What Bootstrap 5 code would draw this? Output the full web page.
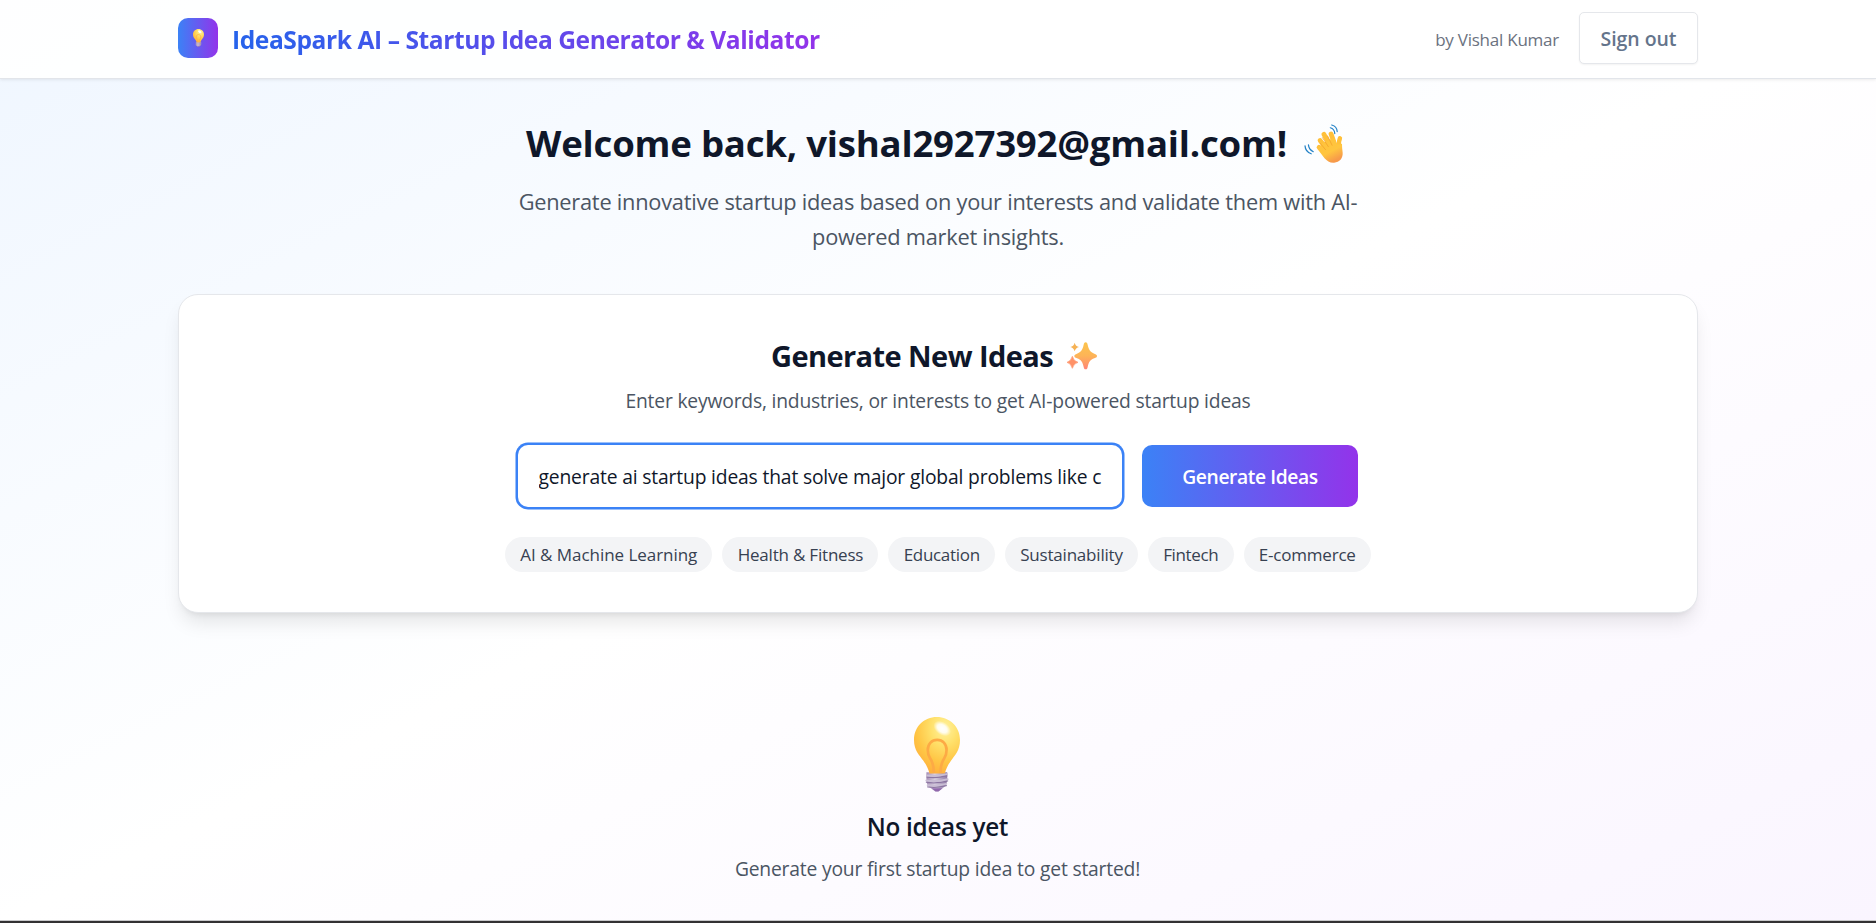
<!DOCTYPE html>
<html lang="en">
<head>
<meta charset="utf-8">
<meta name="viewport" content="width=device-width, initial-scale=1">
<title>IdeaSpark AI – Startup Idea Generator &amp; Validator</title>
<link href="https://cdn.jsdelivr.net/npm/bootstrap@5.3.0/dist/css/bootstrap.min.css" rel="stylesheet">
<style>
  body { font-family: "Open Sans", "Noto Sans", sans-serif; height: 923px; color: #0f172a;
    background: linear-gradient(to bottom right, #eff6ff, #fff 50%, #faf5ff); }
  .wrap { width: 1520px; }
  .topbar { height: 79px; background: rgba(255,255,255,.9); border-bottom: 1px solid #e2e5ea; box-shadow: 0 1px 3px rgba(0,0,0,.08); }
  .logo { width: 40px; height: 40px; border-radius: 10px; margin-bottom: 2px; background: linear-gradient(to right, #3b82f6, #9333ea); }
  .brand-name { margin-left: 14px; font-size: 24.6px; line-height: 35px; letter-spacing: -.44px;
    background: linear-gradient(to right, #2563eb, #9333ea); -webkit-background-clip: text; background-clip: text; color: transparent; }
  .byline { font-size: 17px; letter-spacing: -.24px; color: #6b7280; padding-top: 1px; }
  .signout { width: 119px; height: 52px; border: 1px solid #e5e7eb; border-radius: 5px; background: #fff; color: #64748b; font-size: 19.5px; letter-spacing: -.05px; box-shadow: 0 1px 2px rgba(0,0,0,.05); margin-bottom: 3px; }
  .signout span, .grad-btn span { display: block; padding-top: 2px; }
  .main-col { padding-top: 40px; }
  .hello { font-size: 36.6px; line-height: 45px; letter-spacing: -.22px; margin-bottom: 18px; padding: 2px 7px 0 0; }
  .hello svg { margin: -1px 0 0 17px; }
  .intro { width: 860px; font-size: 21.8px; line-height: 35px; letter-spacing: -.25px; color: #4b5563; margin-bottom: 40px; }
  .panel { height: 319px; padding: 40px; border: 1px solid #e5e7eb; border-radius: 20px; background: #fff; box-shadow: 0 12.5px 19px -4px rgba(0,0,0,.1), 0 5px 7.5px -5px rgba(0,0,0,.1); }
  .panel h2 { font-size: 29px; line-height: 40px; letter-spacing: -.57px; margin-bottom: 10px; padding: 1px 8px 0 0; }
  .panel h2 svg { margin-left: 14px; }
  .hint { font-size: 19.3px; line-height: 30px; letter-spacing: -.19px; color: #4b5563; }
  .prompt-row { gap: 20px; margin: 29px 0 30px; }
  .field { width: 604px; height: 62px; border: 0; border-radius: 10px; padding: 0 20px 0 20.5px; font-size: 19.3px; letter-spacing: -.17px; color: #0f172a; box-shadow: 0 0 0 2.5px #3b82f6; background: #fff; outline: 0; }
  .grad-btn { background: linear-gradient(to right, #3b82f6, #9333ea); width: 216px; height: 62px; border-radius: 10px; border: 0; color: #fff; font-size: 19.3px; letter-spacing: -.42px; }
  .chip-row { gap: 10px; }
  .chip { height: 35px; line-height: 36px; padding: 0 15.2px; border-radius: 18px; background: #f3f4f6; color: #374151; font-size: 17px; letter-spacing: -.2px; }
  .c-ai { letter-spacing: -.045px; }
  .c-fin { letter-spacing: -.35px; }
  .c-edu { letter-spacing: -.3px; }
  .empty { padding: 104px 1px 0 0; }
  .empty h3 { font-size: 24.3px; line-height: 35px; letter-spacing: -.3px; margin: 17px 0 10px; }
  .screen-edge { height: 3px; background: #333133; border-top: 1px solid #c9c9cb; }
</style>
</head>
<body class="d-flex flex-column overflow-hidden">
<svg width="0" height="0" class="position-absolute">
  <defs>
    <radialGradient id="glass" cx=".66" cy=".2" r=".85"><stop offset="0" stop-color="#fff3a0"/><stop offset=".35" stop-color="#ffe06a"/><stop offset=".7" stop-color="#ffc645"/><stop offset="1" stop-color="#ffae3c"/></radialGradient>
    <radialGradient id="shine"><stop offset="0" stop-color="#fff"/><stop offset=".55" stop-color="#fff" stop-opacity=".85"/><stop offset="1" stop-color="#fff" stop-opacity="0"/></radialGradient>
    <linearGradient id="screw" x1="0" x2="1"><stop offset="0" stop-color="#a48bb4"/><stop offset=".4" stop-color="#d8cfe0"/><stop offset="1" stop-color="#8f79a5"/></linearGradient>
    <linearGradient id="star" x1="0" y1="0" x2="0" y2="1"><stop offset="0" stop-color="#fcc44c"/><stop offset=".5" stop-color="#fdb457"/><stop offset="1" stop-color="#ff8478"/></linearGradient>
    <linearGradient id="palm" x1="0" y1="0" x2=".5" y2="1"><stop offset="0" stop-color="#ffc23a"/><stop offset=".65" stop-color="#ffc53f"/><stop offset="1" stop-color="#f79a4a"/></linearGradient>
    <symbol id="bulb" viewBox="43 36 137 223">
      <path d="M80 200h62v20q0 22-17 30l-10 8h-9l-10-8q-16-8-16-28z" fill="url(#screw)"/>
      <path d="M111 36C73 36 43 65 43 104c0 31 16 45 28 62 9 13 15 25 18 38h46c3-13 9-25 18-38 12-17 27-31 27-62 0-39-31-68-69-68z" fill="url(#glass)"/>
      <path d="M102 202c0-21-3-32-11-43-6-8-7-16-7-25 0-18 12-30 28-30s28 12 28 30c0 9-1 17-7 25-8 11-11 22-11 43" fill="none" stroke="#fdaa45" stroke-width="8"/>
      <ellipse cx="127" cy="70" rx="29" ry="19" transform="rotate(35 127 70)" fill="url(#shine)"/>
      <path d="M82 215q28 4 59-4M80 230q30 5 63-4M84 244q26 4 55-4" fill="none" stroke="#8c76a2" stroke-width="4" stroke-linecap="round"/>
      <path d="M82 210q28 4 59-4M80 225q30 5 63-4M84 239q26 4 55-4" fill="none" stroke="#c9bdd4" stroke-width="6" stroke-linecap="round"/>
      <path d="M95 248h33l-12 10h-9z" fill="#9168ad"/>
    </symbol>
    <symbol id="wave" viewBox="40 28 114 114">
      <g fill="none" stroke="#ffc03a" stroke-width="14" stroke-linecap="round">
        <path d="M119 57l12 34M98 58l22 38M87 76l24 30M84 96l24 22"/>
        <path d="M145 70q-6 14 0 38" stroke-width="13"/>
      </g>
      <path d="M96 82l32-14q6 16 10 20 7 0 13-2 0 12 2 26c1 16-9 28-25 29-12 1-20-5-28-13L80 102z" fill="url(#palm)"/>
      <path d="M109 63l13 27M94 68l17 26M88 85l15 18" stroke="#f2a02c" stroke-width="2.2" fill="none" stroke-linecap="round"/>
      <path d="M117 39q12 3 13 17M121 31q15 4 16 19M53 89q1 13 14 20M43 92q1 17 18 23" fill="none" stroke="#2583c7" stroke-width="3.6" stroke-linecap="round"/>
    </symbol>
    <symbol id="sparkles" viewBox="37 24 90 82">
      <path d="M93 24c4 0 5 3 6 7 3 15 8 22 20 27 5 2 8 3 8 7s-3 5-8 7c-12 4-17 11-20 26-1 4-2 7-6 7s-5-3-6-7c-3-15-8-22-20-26-5-2-8-3-8-7s3-5 8-7c12-5 17-12 20-27 1-4 2-7 6-7z" fill="url(#star)"/>
      <path d="M60 25q3 11 13 13q-10 2-13 13q-3-11-13-13q10-2 13-13z" fill="#f6b254"/>
      <path d="M53 66q4 15 17 18q-13 3-17 18q-4-15-16-18q12-3 16-18z" fill="#ff9268" stroke="#ff9268" stroke-width="2" stroke-linejoin="round"/>
    </symbol>
  </defs>
</svg>

<header class="topbar flex-shrink-0">
  <div class="wrap mx-auto h-100 d-flex align-items-center">
    <div class="logo d-flex align-items-center justify-content-center"><svg width="11" height="18"><use href="#bulb"/></svg></div>
    <div class="brand-name fw-bold text-nowrap">IdeaSpark AI – Startup Idea Generator &amp; Validator</div>
    <div class="ms-auto d-flex align-items-center">
      <span class="byline me-3 pe-1">by Vishal Kumar</span>
      <button class="btn signout fw-semibold p-0 text-nowrap"><span>Sign out</span></button>
    </div>
  </div>
</header>

<main class="wrap main-col mx-auto flex-grow-1 d-flex flex-column align-items-center text-center">
  <h1 class="hello fw-bold d-flex align-items-center justify-content-center text-nowrap">Welcome back, vishal2927392@gmail.com!
    <svg class="flex-shrink-0" width="39" height="39"><use href="#wave"/></svg></h1>
  <p class="intro">Generate innovative startup ideas based on your interests and validate them with AI-<br>powered market insights.</p>

  <section class="panel w-100 d-flex flex-column align-items-center flex-shrink-0">
    <h2 class="fw-bold d-flex align-items-center">Generate New Ideas
      <svg class="flex-shrink-0" width="30" height="28"><use href="#sparkles"/></svg></h2>
    <p class="hint mb-0">Enter keywords, industries, or interests to get AI-powered startup ideas</p>
    <div class="prompt-row d-flex">
      <input class="field" type="text" value="generate ai startup ideas that solve major global problems like climate change">
      <button class="btn grad-btn fw-bold p-0"><span class="fw-semibold">Generate Ideas</span></button>
    </div>
    <div class="chip-row d-flex text-nowrap">
      <span class="chip c-ai">AI &amp; Machine Learning</span>
      <span class="chip">Health &amp; Fitness</span>
      <span class="chip c-edu">Education</span>
      <span class="chip">Sustainability</span>
      <span class="chip c-fin">Fintech</span>
      <span class="chip">E-commerce</span>
    </div>
  </section>

  <section class="empty d-flex flex-column align-items-center">
    <svg width="46" height="75"><use href="#bulb"/></svg>
    <h3 class="fw-semibold">No ideas yet</h3>
    <p class="hint mb-0">Generate your first startup idea to get started!</p>
  </section>
</main>
<div class="screen-edge flex-shrink-0"></div>
<script src="https://cdn.jsdelivr.net/npm/bootstrap@5.3.0/dist/js/bootstrap.bundle.min.js"></script>
</body>
</html>
